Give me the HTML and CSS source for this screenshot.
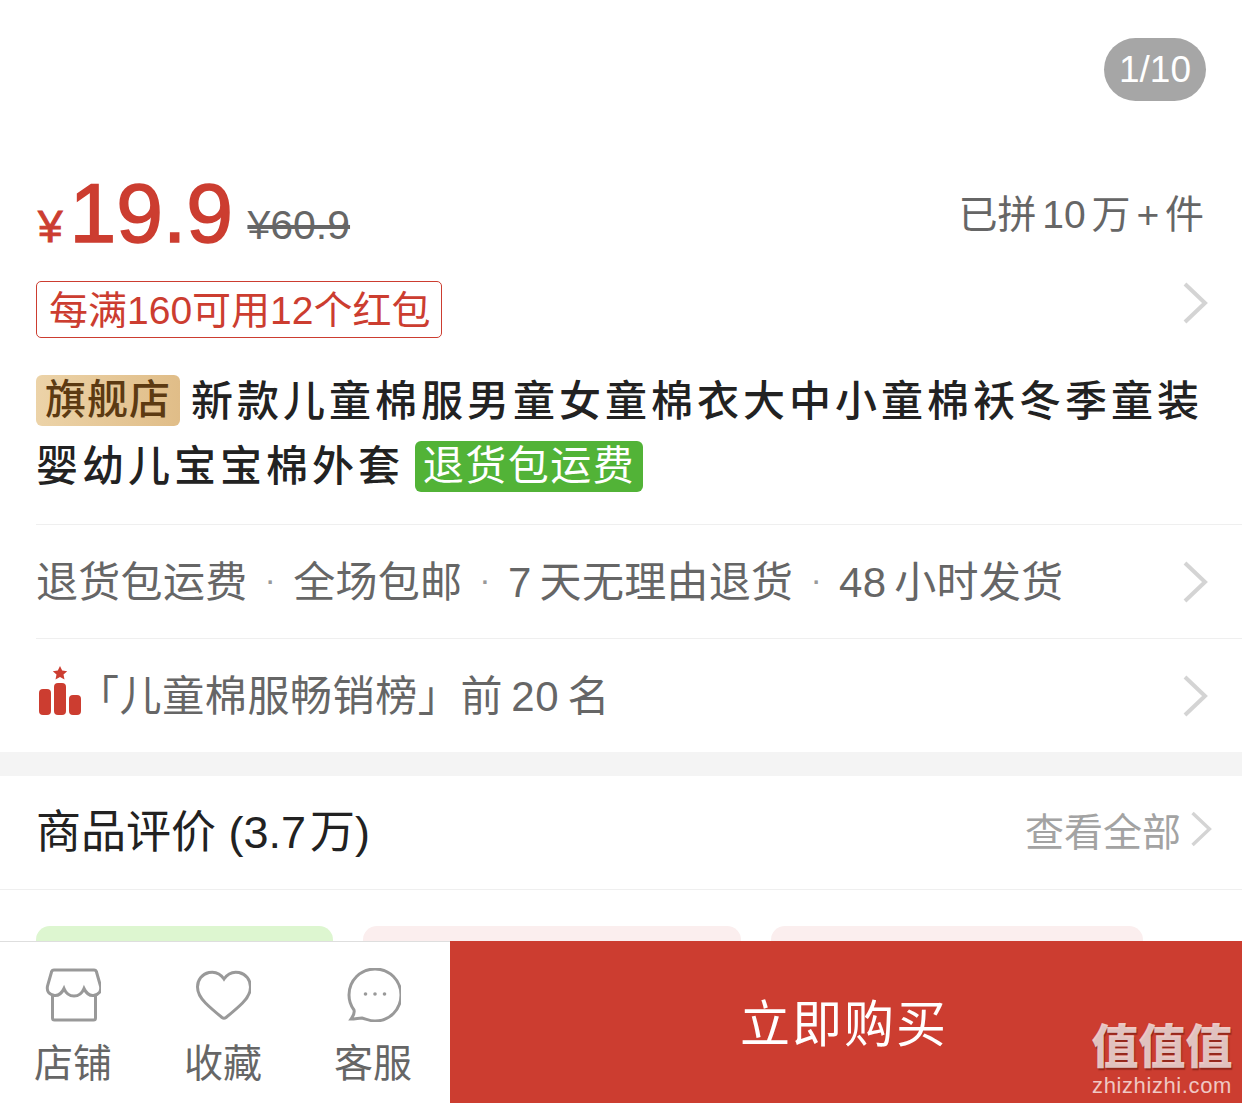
FILE: index.html
```html
<!DOCTYPE html>
<html lang="zh-CN">
<head>
    <meta charset="UTF-8">
    <meta name="viewport" content="width=device-width, initial-scale=1.0">
    <title>商品详情</title>
    <link rel="stylesheet" href="styles.css">
</head>
<body>
    <div class="page">
        <div class="gallery">
            <span class="counter">1/10</span>
        </div>

        <section class="info">
            <div class="price-row">
                <div class="price">
                    <span class="yen">¥</span><span class="amount">19.9</span>
                    <span class="old-price">¥60.9</span>
                </div>
                <span class="sold">已拼 10 万 + 件</span>
            </div>

            <div class="coupon-row">
                <span class="coupon">每满160可用12个红包</span>
                <svg class="chevron" viewBox="0 0 26 44"><path d="M3 3l20 19L3 41"/></svg>
            </div>

            <div class="title">
                <div class="title-line"><span class="tag-store">旗舰店</span><h1>新款儿童棉服男童女童棉衣大中小童棉袄冬季童装</h1></div>
                <div class="title-line"><h1>婴幼儿宝宝棉外套</h1><span class="tag-free">退货包运费</span></div>
            </div>

            <div class="line-row">
                <span class="services">退货包运费<i>·</i>全场包邮<i>·</i>7 天无理由退货<i>·</i>48 小时发货</span>
                <svg class="chevron" viewBox="0 0 26 44"><path d="M3 3l20 19L3 41"/></svg>
            </div>

            <div class="line-row">
                <div class="rank">
                    <svg class="rank-icon" viewBox="0 0 44 50">
                        <path d="M22 0l2.200 4.600 5 .6-3.700 3.400 1 5L22 11.100l-4.500 2.500 1-5-3.700-3.400 5-.6z"/>
                        <rect x="1" y="23" width="12" height="26" rx="4"/>
                        <rect x="16" y="17" width="12" height="32" rx="4"/>
                        <rect x="31" y="29" width="12" height="20" rx="4"/>
                    </svg>
                    <span class="rank-text">「儿童棉服畅销榜」前 20 名</span>
                </div>
                <svg class="chevron" viewBox="0 0 26 44"><path d="M3 3l20 19L3 41"/></svg>
            </div>
        </section>

        <section class="reviews">
            <div class="reviews-head">
                <h2>商品评价 (3.7<span class="thin">万</span>)</h2>
                <span class="see-all">查看全部<svg class="chevron small" viewBox="0 0 26 44"><path d="M3 3l20 19L3 41"/></svg></span>
            </div>
            <div class="chips">
                <span class="chip green"></span>
                <span class="chip pink wide"></span>
                <span class="chip pink"></span>
            </div>
        </section>

        <footer class="bottom-bar">
            <div class="actions">
                <div class="action">
                    <svg viewBox="-1 0 56 54"><path d="M8 2h40q2 0 2.500 2l4 14q1.500 8-7 9.500-6 .5-9.500-7-3 7.500-10 7.500t-10-7.500q-3.500 7.500-9.500 7-8.500-1.500-7-9.500L5.500 4q.5-2 2.500-2z"/><path d="M6.500 27v23q0 2 2 2h39q2 0 2-2V27"/></svg>
                    <span>店铺</span>
                </div>
                <div class="action">
                    <svg viewBox="-1 0 56 50"><path d="M28 9C24 3 18 1.500 13 2.500 6 4 1.500 10 1.500 17c0 6 3 11 8 16 5 5 11 10 16.500 14.500q2 1.500 4 0C35.500 43 41.500 38 46.500 33c5-5 8-10 8-16 0-7-4.500-13-11.500-14.500C38 1.500 32 3 28 9z"/></svg>
                    <span>收藏</span>
                </div>
                <div class="action">
                    <svg viewBox="-1 1 54 54"><path d="M28 2c14.500 0 26 11.500 26 26S42.500 54 28 54c-5 0-9-2-13-3-3 0-7 1-11 1 2-3 4-5 3-9-3-4-5-9-5-15C2 13.500 13.500 2 28 2z"/><circle class="dot" cx="18.500" cy="27" r="1.800"/><circle class="dot" cx="28" cy="27" r="1.800"/><circle class="dot" cx="37.500" cy="27" r="1.800"/></svg>
                    <span>客服</span>
                </div>
            </div>
            <button class="buy">立即购买</button>
            <div class="watermark">
                <b>值值值</b>
                <span>zhizhizhi.com</span>
            </div>
        </footer>
    </div>
</body>
</html>
```

FILE: styles.css
```css
/* general */
* {
    box-sizing: border-box;
}
body {
    margin: 0;
    background-color: #fff;
    color: #222;
    font-family: "Liberation Sans", "Noto Sans CJK SC", sans-serif;
}
.page {
    position: relative;
    width: 1242px;
    height: 1103px;
    overflow: hidden;
}
.chevron {
    width: 26px;
    height: 44px;
    flex: none;
    fill: none;
    stroke: #d4d4d4;
    stroke-width: 4;
}
.chevron.small {
    width: 22px;
    height: 38px;
    margin-left: 9px;
}

/* gallery */
.gallery {
    height: 160px;
    padding: 38px 36px 0 0;
    display: flex;
    justify-content: flex-end;
    align-items: flex-start;
}
.counter {
    width: 102px;
    height: 63px;
    border-radius: 32px;
    background-color: #a6a6a6;
    color: #fff;
    font-size: 37px;
    line-height: 63px;
    text-align: center;
}

/* price */
.info {
    padding-left: 36px;
}
.price-row {
    height: 112px;
    padding-right: 38px;
    display: flex;
    justify-content: space-between;
}
.price {
    padding-left: 2px;
    color: #cc3d30;
    white-space: nowrap;
}
.yen {
    font-size: 44px;
    line-height: 106px;
    margin-right: 7px;
    -webkit-text-stroke: 1px #cc3d30;
}
.amount {
    font-size: 84px;
    line-height: 106px;
    -webkit-text-stroke: 1.5px #cc3d30;
}
.old-price {
    margin-left: 10px;
    color: #666;
    font-size: 41px;
    vertical-align: 3px;
    text-decoration: line-through;
}
.sold {
    padding-top: 31px;
    color: #666;
    font-size: 39px;
    line-height: 48px;
    word-spacing: -5px;
}

/* coupon */
.coupon-row {
    margin-top: 9px;
    padding-right: 34px;
    display: flex;
    justify-content: space-between;
    align-items: flex-start;
}
.coupon {
    height: 57px;
    padding: 0 11px 0 12px;
    border: 1px solid #cc3d30;
    border-radius: 5px;
    color: #cc3d30;
    font-size: 39px;
    line-height: 57px;
    white-space: nowrap;
}

/* title */
.title {
    height: 155px;
    margin-top: 31px;
}
.title-line {
    height: 65px;
    display: flex;
    align-items: flex-start;
}
.title h1 {
    margin: 0;
    color: #222;
    font-size: 42px;
    font-weight: 500;
    letter-spacing: 4px;
    line-height: 65px;
    white-space: nowrap;
}
.tag-store {
    width: 144px;
    height: 51px;
    margin: 6px 11px 0 0;
    border-radius: 6px;
    background: linear-gradient(90deg, #ecd3a8, #e0bd88);
    color: #5c3a12;
    font-size: 41px;
    font-weight: 500;
    letter-spacing: 1px;
    line-height: 51px;
    text-align: center;
    white-space: nowrap;
}
.tag-free {
    width: 228px;
    height: 51px;
    margin: 7px 0 0 11px;
    border-radius: 6px;
    background-color: #52b337;
    color: #fff;
    font-size: 41px;
    letter-spacing: 1.5px;
    line-height: 50px;
    text-align: center;
    white-space: nowrap;
}

/* rows */
.line-row {
    height: 114px;
    padding-right: 34px;
    border-top: 1px solid #efefef;
    display: flex;
    justify-content: space-between;
    align-items: center;
    color: #666;
    font-size: 42px;
}
.services {
    margin-bottom: 6px;
    white-space: nowrap;
    letter-spacing: 0.3px;
    word-spacing: -4px;
}
.services i {
    margin: 0 17px;
    color: #999;
    font-style: normal;
    font-size: 34px;
    vertical-align: 6px;
}
.rank {
    display: flex;
    align-items: center;
    white-space: nowrap;
}
.rank-icon {
    width: 44px;
    height: 50px;
    margin: 0 -5px 10px 2px;
    fill: #cc3d30;
}
.rank-text {
    margin-bottom: 6px;
    letter-spacing: 0.6px;
    word-spacing: -4px;
}

/* reviews */
.reviews {
    border-top: 24px solid #f4f4f4;
}
.reviews-head {
    height: 114px;
    padding: 0 30px 8px 36px;
    border-bottom: 1px solid #efefef;
    display: flex;
    justify-content: space-between;
    align-items: center;
}
.reviews-head h2 {
    margin: 0;
    color: #222;
    font-size: 45px;
    font-weight: 400;
}
.thin {
    margin-left: 4px;
}
.see-all {
    display: flex;
    align-items: center;
    color: #a3a3a3;
    font-size: 39px;
}
.chips {
    margin-top: 36px;
    padding-left: 36px;
    display: flex;
    gap: 30px;
}
.chip {
    width: 297px;
    height: 60px;
    border-radius: 14px;
}
.chip.green {
    background-color: #ddf6d0;
}
.chip.pink {
    width: 372px;
    background-color: #fbeeee;
}
.chip.wide {
    width: 378px;
}

/* bottom bar */
.bottom-bar {
    position: absolute;
    left: 0;
    right: 0;
    bottom: 0;
    height: 162px;
    display: flex;
    background-color: #fff;
    border-top: 1px solid #dedede;
}
.actions {
    width: 450px;
    padding: 26px 38px 0 34px;
    display: flex;
    justify-content: space-between;
}
.action {
    width: 78px;
    display: flex;
    flex-direction: column;
    align-items: center;
    color: #666;
    font-size: 39px;
    line-height: 48px;
    white-space: nowrap;
}
.action svg {
    width: 56px;
    height: 54px;
    margin-bottom: 18px;
    fill: none;
    stroke: #999;
    stroke-width: 3;
}
.action svg .dot {
    fill: #999;
    stroke: none;
}
.buy {
    flex: 1;
    margin-top: -1px;
    padding: 0 4px 4px 0;
    border: none;
    background-color: #cc3d30;
    color: #fff;
    font-family: inherit;
    font-size: 50px;
    letter-spacing: 2px;
    font-weight: 400;
}
.watermark {
    position: absolute;
    right: 8px;
    bottom: 5px;
    width: 144px;
    display: flex;
    flex-direction: column;
    align-items: center;
    color: rgba(255, 255, 255, 0.72);
}
.watermark b {
    font-size: 47px;
    line-height: 54px;
    font-weight: 900;
    white-space: nowrap;
    text-shadow: 1px 2px 1px rgba(90, 20, 10, 0.5);
}
.watermark span {
    font-size: 22px;
    line-height: 24px;
    letter-spacing: 0.6px;
}
```
